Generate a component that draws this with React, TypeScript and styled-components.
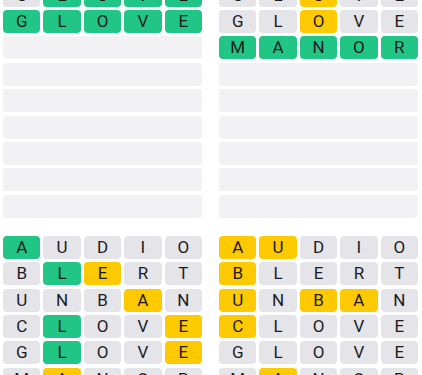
import React from "react";
import styled, { createGlobalStyle } from "styled-components";

const Global = createGlobalStyle`
  html, body { margin: 0; padding: 0; background: #ffffff; overflow: hidden; }
  body { font-family: Roboto, "Noto Sans", Arial, sans-serif; }
`;

type State = "green" | "yellow" | "gray";

const colors: Record<State, string> = {
  green: "#21c585",
  yellow: "#fdc900",
  gray: "#e4e4e9",
};

/* The screenshot is a scrolled viewport: the top boards' first rows sit above it. */
const Viewport = styled.div`
  margin-top: -95.6px;
  padding: 0 4px 0 3px;
  display: grid;
  grid-template-columns: 1fr 1fr;
  column-gap: 17px;
  row-gap: 18.2px;
`;

const Board = styled.div`
  display: flex;
  flex-direction: column;
  gap: 3.4px;
`;

const Row = styled.div`
  display: grid;
  grid-template-columns: repeat(5, 1fr);
  column-gap: 3px;
  height: 23px;
`;

const EmptyRow = styled.div`
  height: 23px;
  border-radius: 3px;
  background: #f2f2f5;
`;

const Tile = styled.div<{ $state: State }>`
  display: flex;
  align-items: center;
  justify-content: center;
  border-radius: 4px;
  background: ${(p) => colors[p.$state]};
  color: #1c1c1e;
  font-size: 17px;
  font-weight: 400;
  line-height: 1;
`;

const words = ["AUDIO", "BLERT", "UNBAN", "CLOVE", "GLOVE", "MANOR"];

function score(guess: string, target: string): State[] {
  const res: State[] = Array(5).fill("gray");
  const counts: Record<string, number> = {};
  for (let i = 0; i < 5; i++) {
    if (guess[i] === target[i]) res[i] = "green";
    else counts[target[i]] = (counts[target[i]] || 0) + 1;
  }
  for (let i = 0; i < 5; i++) {
    if (res[i] !== "green" && counts[guess[i]]) {
      res[i] = "yellow";
      counts[guess[i]]--;
    }
  }
  return res;
}

type BoardSpec = { target: string; total: number };

const boards: BoardSpec[] = [
  { target: "GLOVE", total: 12 },
  { target: "MANOR", total: 12 },
  { target: "LEAPT", total: 12 },
  { target: "CUBBY", total: 12 },
];

function BoardView({ target, total }: BoardSpec) {
  const solvedAt = words.indexOf(target);
  const guesses = solvedAt >= 0 ? words.slice(0, solvedAt + 1) : words;
  const empties = total - guesses.length;
  return (
    <Board>
      {guesses.map((g, r) => {
        const st = score(g, target);
        return (
          <Row key={r}>
            {g.split("").map((ch, i) => (
              <Tile key={i} $state={st[i]}>
                {ch}
              </Tile>
            ))}
          </Row>
        );
      })}
      {Array.from({ length: empties }).map((_, i) => (
        <EmptyRow key={"e" + i} />
      ))}
    </Board>
  );
}

// Custom colouring for bottom boards to match the screenshot exactly
const bottomLeft: State[][] = [
  ["green", "gray", "gray", "gray", "gray"],
  ["gray", "green", "yellow", "gray", "gray"],
  ["gray", "gray", "gray", "yellow", "gray"],
  ["gray", "green", "gray", "gray", "yellow"],
  ["gray", "green", "gray", "gray", "yellow"],
  ["gray", "yellow", "gray", "gray", "gray"],
];
const bottomRight: State[][] = [
  ["yellow", "yellow", "gray", "gray", "gray"],
  ["yellow", "gray", "gray", "gray", "gray"],
  ["yellow", "gray", "yellow", "yellow", "gray"],
  ["yellow", "gray", "gray", "gray", "gray"],
  ["gray", "gray", "gray", "gray", "gray"],
  ["gray", "yellow", "gray", "gray", "gray"],
];

function FixedBoard({ states, total }: { states: State[][]; total: number }) {
  return (
    <Board>
      {states.map((st, r) => (
        <Row key={r}>
          {words[r].split("").map((ch, i) => (
            <Tile key={i} $state={st[i]}>
              {ch}
            </Tile>
          ))}
        </Row>
      ))}
      {Array.from({ length: total - states.length }).map((_, i) => (
        <EmptyRow key={"e" + i} />
      ))}
    </Board>
  );
}

export default function App() {
  return (
    <>
      <Global />
      <Viewport>
        <BoardView {...boards[0]} />
        <BoardView {...boards[1]} />
        <FixedBoard states={bottomLeft} total={8} />
        <FixedBoard states={bottomRight} total={8} />
      </Viewport>
    </>
  );
}
